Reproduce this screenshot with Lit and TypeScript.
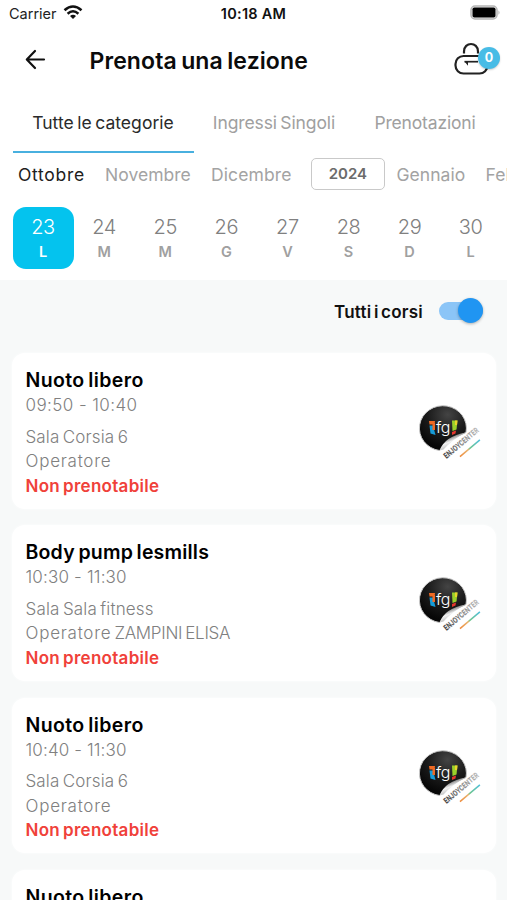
import { LitElement, html, css } from "lit";
import { customElement, property } from "lit/decorators.js";
import { classMap } from "lit/directives/class-map.js";

interface Label { text: string; track: number; }
interface Lesson { title: Label; time: Label; room: Label; operator: string; }

const tabs: Label[] = [
  { text: "Tutte le categorie", track: 0.04 },
  { text: "Ingressi Singoli", track: -0.1 },
  { text: "Prenotazioni", track: -0.16 },
];
const months: Label[] = [
  { text: "Ottobre", track: 0.7 },
  { text: "Novembre", track: 0.02 },
  { text: "Dicembre", track: 0.13 },
  { text: "2024", track: 0 },
  { text: "Gennaio", track: 0.04 },
  { text: "Febbraio", track: 0.04 },
];
const days = [[23, "L"], [24, "M"], [25, "M"], [26, "G"], [27, "V"], [28, "S"], [29, "D"], [30, "L"]];
const swim = { text: "Nuoto libero", track: 0.37 };
const lane = { text: "Sala Corsia 6", track: 0.13 };
const lessons: Lesson[] = [
  { title: swim, time: { text: "09:50 - 10:40", track: 0.42 }, room: lane, operator: "" },
  {
    title: { text: "Body pump lesmills", track: 0.19 },
    time: { text: "10:30 - 11:30", track: 0.17 },
    room: { text: "Sala Sala fitness", track: 0.15 },
    operator: "ZAMPINI ELISA",
  },
  { title: swim, time: { text: "10:40 - 11:30", track: 0.13 }, room: lane, operator: "" },
  { title: swim, time: { text: "11:30 - 12:20", track: 0.2 }, room: lane, operator: "" },
];

const spaced = (l: Label) => html`<span style="letter-spacing:${l.track}px">${l.text}</span>`;

@customElement("club-logo")
export class ClubLogo extends LitElement {
  static styles = css`
    :host { display: block; width: 72px; height: 64px; }
    svg { display: block; }
    .fg { font: 300 16px Inter, sans-serif; fill: #fff; letter-spacing: -0.3px; }
    .name { font: 800 8px Inter, sans-serif; }
  `;
  render() {
    return html`<svg width="72" height="64" viewBox="0 0 72 64">
      <defs>
        <radialGradient id="disc" cx="0.6" cy="0.2" r="0.75">
          <stop offset="0" stop-color="#444" />
          <stop offset="0.55" stop-color="#1c1c1c" />
          <stop offset="1" stop-color="#070707" />
        </radialGradient>
        <linearGradient id="curl" x1="0.3" y1="0.2" x2="0.7" y2="0.9">
          <stop offset="0.1" stop-color="#777" />
          <stop offset="0.4" stop-color="#f2f2f2" />
          <stop offset="0.9" stop-color="#aaa" />
        </linearGradient>
        <linearGradient id="word" x1="0" x2="1">
          <stop offset="0" stop-color="#454545" />
          <stop offset="0.45" stop-color="#808080" />
          <stop offset="1" stop-color="#bcbcbc" />
        </linearGradient>
        <linearGradient id="rule" x1="0" x2="1">
          <stop offset="0" stop-color="#ee8a3a" />
          <stop offset="0.4" stop-color="#e9b36e" />
          <stop offset="0.5" stop-color="#6ec48d" />
          <stop offset="1" stop-color="#4fc0dd" />
        </linearGradient>
      </defs>
      <path d="M54 32.500A23.500 22.500 0 1 0 27.500 50.500Q35 40 54 32.500Z" fill="url(#disc)" stroke="#c9c9c9" stroke-width="1" />
      <path d="M27.500 50.500Q33 36 54 32.500Q41 39 31.500 49.500Z" fill="url(#curl)" />
      <path d="M17 21h6l-.5 3.500h-5z" fill="#ef6a24" />
      <path d="M17.500 25.500h3.500l2.500 9.500-5-1.500z" fill="#169bd7" />
      <path d="M20.500 23h2.500v7h-2.500z" fill="#ef6a24" />
      <text class="fg" x="24" y="33">fg</text>
      <path d="M40 20.500h5.500l-1 9-4 1.500z" fill="#9bd02b" />
      <path d="M40 32l4-1.500-.5 3-3.500 1.500z" fill="#e5362d" />
      <path d="M43 20.500h2.500l-.5 4.500h-2z" fill="#e9d52b" />
      <g transform="translate(34.500 59) rotate(-40)">
        <text class="name" x="0" y="0" textLength="43" lengthAdjust="spacingAndGlyphs" fill="url(#word)">ENJOYCENTER</text>
      </g>
      <g transform="translate(47.500 56) rotate(-40)"><rect width="26" height="1.500" fill="url(#rule)" /></g>
    </svg>`;
  }
}

@customElement("lesson-card")
export class LessonCard extends LitElement {
  @property({ attribute: false }) lesson!: Lesson;
  static styles = css`
    :host {
      display: flex; justify-content: space-between; box-sizing: border-box;
      height: 155.5px; padding: 14px 12px 0 13.5px; border-radius: 13px;
      background: #fff; box-shadow: 0 0 3px rgba(255, 255, 255, 0.9);
      color: #808080; font-size: 17px; font-weight: 330; white-space: nowrap; word-spacing: -1.5px;
    }
    h2 { margin: 0; color: #000; font-size: 19.5px; line-height: 26px; font-weight: 600; }
    p { margin: 0; line-height: 24.5px; }
    .time { margin-bottom: 7px; word-spacing: 0; }
    .operator { letter-spacing: 0.75px; }
    .person { letter-spacing: -0.28px; }
    .closed { color: #f0413a; font-weight: 600; letter-spacing: 0.28px; }
    club-logo { margin-top: 33px; }
  `;
  render() {
    const l = this.lesson;
    return html`<div>
        <h2>${spaced(l.title)}</h2>
        <p class="time">${spaced(l.time)}</p>
        <p>${spaced(l.room)}</p>
        <p><span class="operator">Operatore</span><span class="person"> ${l.operator}</span></p>
        <p class="closed">Non prenotabile</p>
      </div>
      <club-logo></club-logo>`;
  }
}

@customElement("app-root")
export class AppRoot extends LitElement {
  static styles = css`
    :host {
      display: flex; flex-direction: column; height: 900px; overflow: hidden;
      background: #f7f9f9; font-family: Inter, "Open Sans", sans-serif; color: #000; white-space: nowrap;
    }
    .top { background: #fff; height: 280px; flex: none; }
    .status { display: grid; grid-template-columns: 1fr auto 1fr; align-items: center; height: 27px; padding: 0 6px 0 9px; font-size: 14.5px; color: #222; }
    .carrier { display: flex; align-items: center; gap: 6px; }
    .clock { font-weight: 600; letter-spacing: 0.25px; margin-left: -3px; color: #111; }
    .status svg { display: block; margin-top: -2px; }
    .battery { justify-self: end; }
    .bar { display: flex; align-items: center; height: 66px; padding: 0 7px 0 24px; }
    .bar h1 { margin: 0 auto 0 41.5px; font-size: 23px; line-height: 30px; font-weight: 600; letter-spacing: 0.1px; word-spacing: -1.5px; padding-top: 2px; color: #0b0b0b; }
    .bag { position: relative; width: 47px; height: 38px; }
    .badge {
      position: absolute; right: 0; top: 6px; width: 22px; height: 22px; border-radius: 50%;
      background: #48bce6; color: #fff; font-size: 12.5px; line-height: 22px; font-weight: 700; text-align: center;
      box-shadow: 0 1px 2px rgba(0, 0, 0, 0.2);
    }
    .tabs { display: flex; height: 60px; padding-left: 12.5px; font-size: 17.5px; color: #a0a0a0; word-spacing: -1.5px; }
    .tab { box-sizing: border-box; height: 60px; text-align: center; line-height: 60px; width: 161px; border-bottom: 2px solid transparent; flex: none; }
    .tab:first-child { width: 181px; }
    .tab:last-child { width: 141px; }
    .tab.on { color: #2a2a2a; border-color: #48b0df; }
    .months { display: flex; align-items: center; gap: 20.2px; height: 43px; padding-left: 18px; font-size: 17.5px; color: #a3a3a3; overflow: hidden; }
    .month { flex: none; }
    .month.on { color: #202020; }
    .month.year {
      box-sizing: border-box; width: 74px; height: 32px; margin: -1px -8.5px 0 -1px; border: 1px solid #c9c9c9; border-radius: 5px;
      color: #6b6b6b; font-size: 15px; font-weight: 600; line-height: 29px; text-align: center;
    }
    .days { display: flex; padding: 11px 0 0 12.5px; }
    .day { width: 61.1px; height: 61.5px; flex: none; text-align: center; border-radius: 13px; color: #808080; }
    .day.on { background: #04c3ee; color: #fff; }
    .num { font-size: 20px; line-height: 24px; padding-top: 8px; font-weight: 330; letter-spacing: -0.4px; }
    .wd { font-size: 14.5px; line-height: 20px; margin-top: 3px; font-weight: 600; color: #a0a0a0; }
    .day.on .wd { color: #fff; }
    .filter { display: flex; align-items: center; justify-content: flex-end; gap: 16px; flex: none; height: 73px; box-sizing: border-box; padding: 0 24px 12px 0; }
    .filter b { font-size: 17px; font-weight: 600; letter-spacing: 0.22px; word-spacing: -2px; padding-top: 3px; color: #111; }
    .track { width: 44px; height: 18px; border-radius: 9px; background: #8bc5f7; display: flex; align-items: center; justify-content: flex-end; }
    .knob { width: 25px; height: 25px; border-radius: 50%; background: #2095f2; box-shadow: 0 1px 3px rgba(0, 0, 0, 0.3); flex: none; }
    .list { display: flex; flex-direction: column; gap: 16.9px; padding: 0 11px 0 12px; }
    lesson-card { flex: none; }
  `;

  render() {
    return html`
      <div class="top">
        <div class="status">
          <div class="carrier">Carrier
            <svg width="20" height="15" viewBox="0 0 20 15" fill="none" stroke="#111" stroke-width="2.5">
              <path d="M1.500 5.300Q10-2.300 18.500 5.300" /><path d="M4.600 8.700Q10 3.900 15.400 8.700" />
              <path d="M7 11Q10 8.300 13 11L10 14Z" fill="#111" stroke="none" />
            </svg>
          </div>
          <div class="clock">10:18 AM</div>
          <svg class="battery" width="31" height="15" viewBox="0 0 31 15">
            <rect x="1" y="1" width="26" height="13" rx="4" fill="#eee" stroke="#b5b5b5" stroke-width="1.5" />
            <rect x="2.500" y="2.500" width="23" height="10" rx="1.800" fill="#000" />
            <path d="M28.500 5.200q2 2.300 0 4.600z" fill="#aaa" />
          </svg>
        </div>
        <div class="bar">
          <svg width="24" height="22" viewBox="0 0 24 22" fill="none" stroke="#111" stroke-width="2.2" stroke-linecap="round" stroke-linejoin="round">
            <path d="M20 10.500H3M11 2L2.800 10.500L11 19" />
          </svg>
          <h1>Prenota una lezione</h1>
          <div class="bag">
            <svg width="47" height="38" viewBox="0 0 47 38" fill="none" stroke="#222" stroke-width="2.200">
              <path d="M11 12.500V10.500C11 0.500 25 0.500 25 10.500V12.500" />
              <rect x="2.500" y="15" width="32" height="17.500" rx="8" />
              <path d="M11.500 20.700H25" stroke-width="1.700" /><path d="M11.500 20.500h3.500v4.300z" fill="#222" stroke="none" />
            </svg>
            <div class="badge">0</div>
          </div>
        </div>
        <div class="tabs">${tabs.map((t, i) => html`<div class=${classMap({ tab: true, on: i === 0 })}>${spaced(t)}</div>`)}</div>
        <div class="months">
          ${months.map((m, i) => html`<div class=${classMap({ month: true, on: i === 0, year: m.text === "2024" })}>${spaced(m)}</div>`)}
        </div>
        <div class="days">
          ${days.map(([n, d], i) => html`<div class=${classMap({ day: true, on: i === 0 })}><div class="num">${n}</div><div class="wd">${d}</div></div>`)}
        </div>
      </div>
      <div class="filter"><b>Tutti i corsi</b><div class="track"><div class="knob"></div></div></div>
      <div class="list">${lessons.map((l) => html`<lesson-card .lesson=${l}></lesson-card>`)}</div>
    `;
  }
}
